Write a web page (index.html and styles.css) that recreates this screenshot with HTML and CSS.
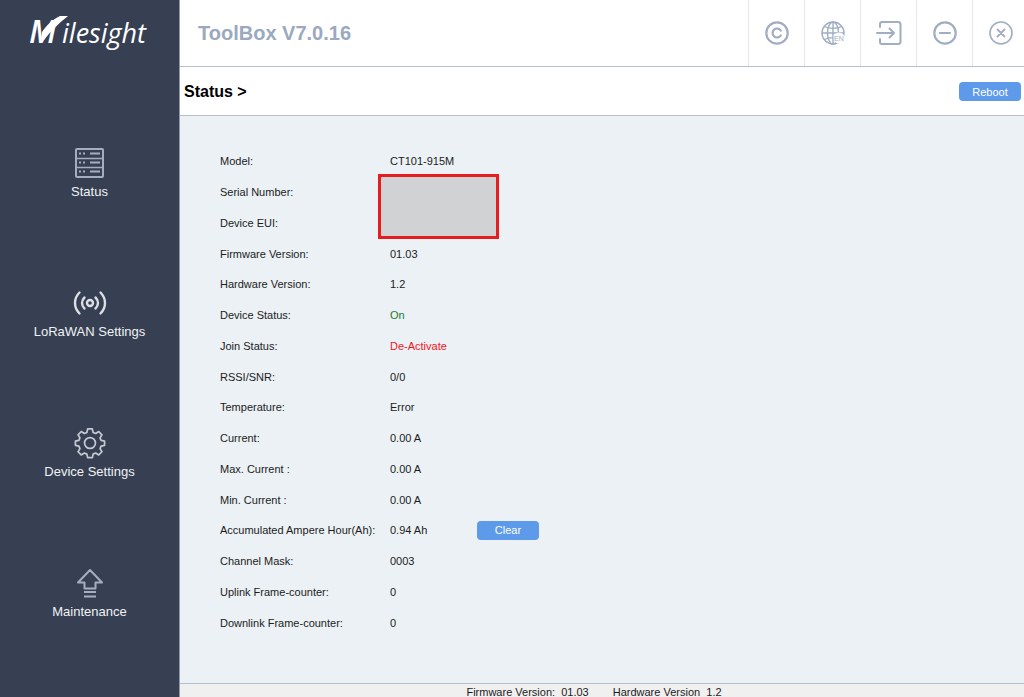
FILE: index.html
```html
<!DOCTYPE html>
<html lang="en">
<head>
    <meta charset="UTF-8">
    <meta name="viewport" content="width=device-width, initial-scale=1.0">
    <title>ToolBox V7.0.16</title>
    <link rel="stylesheet" href="styles.css">
</head>
<body>
    <!-- Sidebar -->
    <aside class="sidebar">
        <a href="#" class="logo" aria-label="Milesight">
            <svg width="130" height="44" viewBox="0 0 130 44">
                <text class="logo-m" x="5" y="30">M</text>
                <path d="M17 26L20 27C27 18 34 11 44 3H36C28 7 22 13 18 19Z" fill="#fff"/>
                <text class="logo-rest" x="38" y="30">ilesight</text>
            </svg>
        </a>
        <nav class="menu">
            <a href="#" class="menu-item">
                <svg width="32" height="32" viewBox="0 0 32 32" fill="none" stroke="#a3afbf" stroke-width="2">
                    <rect x="2" y="2" width="27" height="28" rx="1"/>
                    <path d="M2 11.5h27M2 20.5h27" stroke-width="1.5"/>
                    <path d="M16 6.5h10M16 15.5h10M16 24.5h10"/>
                    <path d="M5 6.5h2M9 6.5h2M5 15.5h2M9 15.5h2M5 24.5h2M9 24.5h2"/>
                </svg>
                <span>Status</span>
            </a>
            <a href="#" class="menu-item">
                <svg width="34" height="32" viewBox="0 0 34 32" fill="none" stroke="#dcdfe3" stroke-width="2.4" stroke-linecap="round">
                    <circle cx="17" cy="16" r="3"/>
                    <path d="M11.5 10.5C8.2 13.5 8.2 18.5 11.5 21.5M22.5 10.5C25.8 13.5 25.8 18.5 22.5 21.5"/>
                    <path d="M6.5 5.5C.5 11.5.5 20.5 6.5 26.5M27.5 5.5C33.5 11.5 33.5 20.5 27.5 26.5"/>
                </svg>
                <span>LoRaWAN Settings</span>
            </a>
            <a href="#" class="menu-item">
                <svg width="32" height="32" viewBox="-1 -1 34 34" fill="none" stroke="#c5cad1" stroke-width="1.8" stroke-linejoin="round">
                    <circle cx="16" cy="16" r="5.8"/>
                    <path d="M13.5 1h5l.8 3.8 2.7 1.1 3.3-2.1 3.4 3.5-2 3.3 1.1 2.6 3.7.8v4.500l-3.700.8-1.100 2.700 2 3.300-3.400 3.400-3.300-2-2.700 1.100-.8 3.700h-5l-.8-3.700-2.700-1.100-3.300 2-3.400-3.400 2-3.300-1.100-2.700-3.700-.8v-4.500l3.700-.8 1.100-2.600-2-3.300 3.400-3.500 3.300 2.100 2.700-1.100z"/>
                </svg>
                <span>Device Settings</span>
            </a>
            <a href="#" class="menu-item">
                <svg width="32" height="32" viewBox="0 0 32 32" fill="none" stroke="#a3afbf" stroke-width="2" stroke-linejoin="round">
                    <path d="M16 3L28 15.5H21.5V21.5H10.5V15.5H4Z"/>
                    <path d="M10 25h12M10 29.5h12"/>
                </svg>
                <span>Maintenance</span>
            </a>
        </nav>
    </aside>

    <div class="content">
        <!-- Title bar -->
        <header class="topbar">
            <h1>ToolBox V7.0.16</h1>
            <div class="tools">
                <button class="tool" aria-label="Copyright">
                    <svg width="26" height="26" viewBox="0 0 26 26" fill="none" stroke="#a0adc2" stroke-width="2.2" stroke-linecap="round">
                        <circle cx="13" cy="13" r="10.7"/>
                        <path d="M16.8 10.5A4.500 4.500 0 1 0 16.8 15.500"/>
                    </svg>
                </button>
                <button class="tool" aria-label="Language">
                    <svg width="26" height="26" viewBox="0 0 26 26" fill="none" stroke="#a0adc2" stroke-width="1.4">
                        <circle cx="13" cy="13" r="11"/>
                        <ellipse cx="13" cy="13" rx="5.5" ry="11"/>
                        <path d="M13 2v22M2 13h22M4.5 6.5C9 9 17 9 21.5 6.5M4.5 19.5C9 17 17 17 21.5 19.5"/>
                        <circle cx="19" cy="18" r="5.5" fill="#fff" stroke="none"/>
                        <text class="lang" x="14" y="21">EN</text>
                    </svg>
                </button>
                <button class="tool" aria-label="Log in">
                    <svg width="26" height="26" viewBox="0 0 26 26" fill="none" stroke="#a0adc2" stroke-width="2" stroke-linecap="round" stroke-linejoin="round">
                        <path d="M4 7V4Q4 2 6 2H22Q24.500 2 24.500 4.500V21.500Q24.500 24 22 24H6Q4 24 4 22V19"/>
                        <path d="M1 13H18M13.5 8.5L18 13L13.5 17.5"/>
                    </svg>
                </button>
                <button class="tool" aria-label="Minimize">
                    <svg width="26" height="26" viewBox="0 0 26 26" fill="none" stroke="#a0adc2" stroke-width="2.2" stroke-linecap="round">
                        <circle cx="13" cy="13" r="10.7"/>
                        <path d="M8 13h10"/>
                    </svg>
                </button>
                <button class="tool tool-close" aria-label="Close">
                    <svg width="26" height="26" viewBox="0 0 26 26" fill="none" stroke="#a0adc2" stroke-width="1.6" stroke-linecap="round">
                        <circle cx="13" cy="13" r="11"/>
                        <path d="M9.5 9.5l7 7M16.5 9.5l-7 7" stroke-width="1.8"/>
                    </svg>
                </button>
            </div>
        </header>

        <div class="subbar">
            <h2>Status &gt;</h2>
            <button class="btn">Reboot</button>
        </div>

        <!-- Device status -->
        <main class="panel">
            <dl class="status">
                <div class="row"><dt>Model:</dt><dd>CT101-915M</dd></div>
                <div class="row"><dt>Serial Number:</dt><dd><span class="mask"></span></dd></div>
                <div class="row"><dt>Device EUI:</dt><dd></dd></div>
                <div class="row"><dt>Firmware Version:</dt><dd>01.03</dd></div>
                <div class="row"><dt>Hardware Version:</dt><dd>1.2</dd></div>
                <div class="row"><dt>Device Status:</dt><dd class="on">On</dd></div>
                <div class="row"><dt>Join Status:</dt><dd class="off">De-Activate</dd></div>
                <div class="row"><dt>RSSI/SNR:</dt><dd>0/0</dd></div>
                <div class="row"><dt>Temperature:</dt><dd>Error</dd></div>
                <div class="row"><dt>Current:</dt><dd>0.00 A</dd></div>
                <div class="row"><dt>Max. Current :</dt><dd>0.00 A</dd></div>
                <div class="row"><dt>Min. Current :</dt><dd>0.00 A</dd></div>
                <div class="row"><dt>Accumulated Ampere Hour(Ah):</dt><dd><span class="value">0.94 Ah</span><button class="btn">Clear</button></dd></div>
                <div class="row"><dt>Channel Mask:</dt><dd>0003</dd></div>
                <div class="row"><dt>Uplink Frame-counter:</dt><dd>0</dd></div>
                <div class="row"><dt>Downlink Frame-counter:</dt><dd>0</dd></div>
            </dl>
        </main>

        <footer class="footer">
            <span>Firmware Version:&nbsp; 01.03</span>
            <span>Hardware Version&nbsp; 1.2</span>
        </footer>
    </div>
</body>
</html>
```
FILE: styles.css
```css
* {
    box-sizing: border-box;
}
body {
    margin: 0;
    display: flex;
    min-height: 100vh;
    font-family: "Liberation Sans", Arial, sans-serif;
    font-size: 11px;
    color: #1c1c1c;
    background-color: #ebf1f5;
}
button {
    font-family: inherit;
    border: none;
    padding: 0;
    cursor: pointer;
}
h1, h2, dl, dd {
    margin: 0;
}

/* Sidebar */
.sidebar {
    width: 180px;
    flex-shrink: 0;
    background-color: #364052;
    border-right: 1px solid #8c97a8;
}
.logo {
    display: block;
    height: 66px;
    padding: 13px 0 0 24px;
}
.logo svg {
    display: block;
}
.logo text {
    font-family: "Open Sans", sans-serif;
    font-style: italic;
    fill: #fff;
}
.logo .logo-m {
    font-size: 32px;
    font-weight: 600;
}
.logo .logo-rest {
    font-size: 27px;
}
.menu {
    display: flex;
    flex-direction: column;
    gap: 84px;
    padding-top: 81px;
}
.menu-item {
    display: flex;
    flex-direction: column;
    align-items: center;
    gap: 4px;
    height: 56px;
    font-size: 13px;
    line-height: 18px;
    color: #f0f2f5;
    text-decoration: none;
}

/* Header */
.content {
    flex: 1;
    display: flex;
    flex-direction: column;
}
.topbar {
    display: flex;
    justify-content: space-between;
    align-items: center;
    height: 67px;
    padding-left: 18px;
    background-color: #fff;
    border-bottom: 1px solid #b4bfd0;
}
.topbar h1 {
    font-size: 20px;
    color: #9aa9bf;
}
.tools {
    display: flex;
    height: 100%;
}
.tool {
    display: flex;
    align-items: center;
    justify-content: center;
    width: 56px;
    background: none;
    border-left: 1px solid #e6e8ec;
}
.tool-close {
    width: 52px;
    padding-left: 4px;
}
.lang {
    font-size: 7px;
    fill: #a0adc2;
    stroke: none;
}
.subbar {
    display: flex;
    justify-content: space-between;
    align-items: center;
    height: 49px;
    padding: 1px 3px 0 4px;
    background-color: #fff;
    border-bottom: 1px solid #b4bfd0;
}
.subbar h2 {
    font-size: 16px;
    color: #000;
}
.btn {
    width: 62px;
    height: 19px;
    border-radius: 4px;
    font-size: 11px;
    color: #fff;
    background-color: #5e9aea;
}

/* Status list */
.panel {
    flex: 1;
    display: flex;
    padding: 30px 40px 45px;
}
.status {
    flex: 1;
    display: grid;
    grid-auto-rows: 1fr;
}
.row {
    display: flex;
    align-items: center;
}
.row dt {
    width: 170px;
}
.row dd {
    position: relative;
    display: flex;
    align-items: center;
}
.value {
    width: 87px;
}
.on {
    color: #1c7d2c;
}
.off {
    color: #f3141c;
}
/* covers the serial number and EUI values */
.mask {
    position: absolute;
    left: -12px;
    top: -18px;
    width: 121px;
    height: 65px;
    background-color: #d1d2d3;
    border: 3px solid #e81c1f;
}

/* Footer */
.footer {
    display: flex;
    justify-content: center;
    gap: 24px;
    height: 14px;
    padding: 2px 16px 0 0;
    line-height: 12px;
    background-color: #f0f0f0;
    border-top: 1px solid #b4bfd0;
}
```
